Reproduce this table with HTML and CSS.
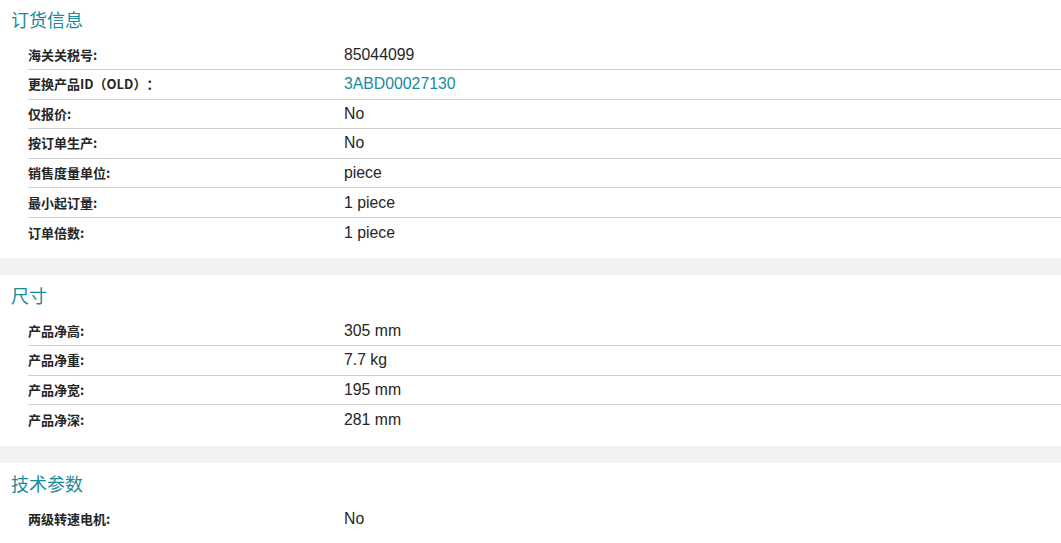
FILE: index.html
```html
<!DOCTYPE html>
<html lang="zh">
<head>
<meta charset="utf-8">
<link rel="stylesheet" href="styles.css">
</head>
<body>
<section class="section section-first">
  <h2 class="section-title">订货信息</h2>
  <div class="rows">
    <div class="row"><div class="label">海关关税号:</div><div class="value">85044099</div></div>
    <div class="row"><div class="label">更换产品ID（OLD）：</div><div class="value"><a class="link" href="#">3ABD00027130</a></div></div>
    <div class="row"><div class="label">仅报价:</div><div class="value">No</div></div>
    <div class="row"><div class="label">按订单生产:</div><div class="value">No</div></div>
    <div class="row"><div class="label">销售度量单位:</div><div class="value">piece</div></div>
    <div class="row"><div class="label">最小起订量:</div><div class="value">1 piece</div></div>
    <div class="row"><div class="label">订单倍数:</div><div class="value">1 piece</div></div>
  </div>
</section>
<div class="band"></div>
<section class="section">
  <h2 class="section-title">尺寸</h2>
  <div class="rows">
    <div class="row"><div class="label">产品净高:</div><div class="value">305 mm</div></div>
    <div class="row"><div class="label">产品净重:</div><div class="value">7.7 kg</div></div>
    <div class="row"><div class="label">产品净宽:</div><div class="value">195 mm</div></div>
    <div class="row"><div class="label">产品净深:</div><div class="value">281 mm</div></div>
  </div>
</section>
<div class="band"></div>
<section class="section">
  <h2 class="section-title">技术参数</h2>
  <div class="rows">
    <div class="row"><div class="label">两级转速电机:</div><div class="value">No</div></div>
  </div>
</section>
</body>
</html>
```
FILE: styles.css
```css
html, body {
  margin: 0;
  padding: 0;
  background: #fff;
}
body {
  font-family: "Liberation Sans", Arial, "Noto Sans CJK SC", sans-serif;
  color: #262626;
}
.section {
  padding: 10px 0 11.4px 0;
}
.section-first {
  padding-top: 9px;
  padding-bottom: 10.4px;
}
.section-title {
  margin: 0 0 7.4px 11px;
  font-family: "Liberation Sans", "Noto Sans CJK SC", sans-serif;
  font-size: 18px;
  line-height: 24px;
  font-weight: normal;
  color: #1a8b9b;
}
.rows {
  margin-left: 28px;
}
.row {
  display: grid;
  grid-template-columns: 316px 1fr;
  align-items: center;
  box-sizing: border-box;
  height: 29.6px;
  border-bottom: 1px solid #cfcfcf;
}
.row:last-child {
  border-bottom: none;
}
.label {
  font-family: "Noto Sans CJK SC", "Liberation Sans", sans-serif;
  font-size: 13px;
  font-weight: bold;
  color: #262626;
  line-height: 18px;
  text-spacing-trim: space-all;
}
.value {
  font-size: 15.8px;
  line-height: 20px;
  color: #262626;
}
.link {
  color: #1a8b9b;
  text-decoration: none;
}
.band {
  height: 17px;
  background: #f2f2f2;
}
```
